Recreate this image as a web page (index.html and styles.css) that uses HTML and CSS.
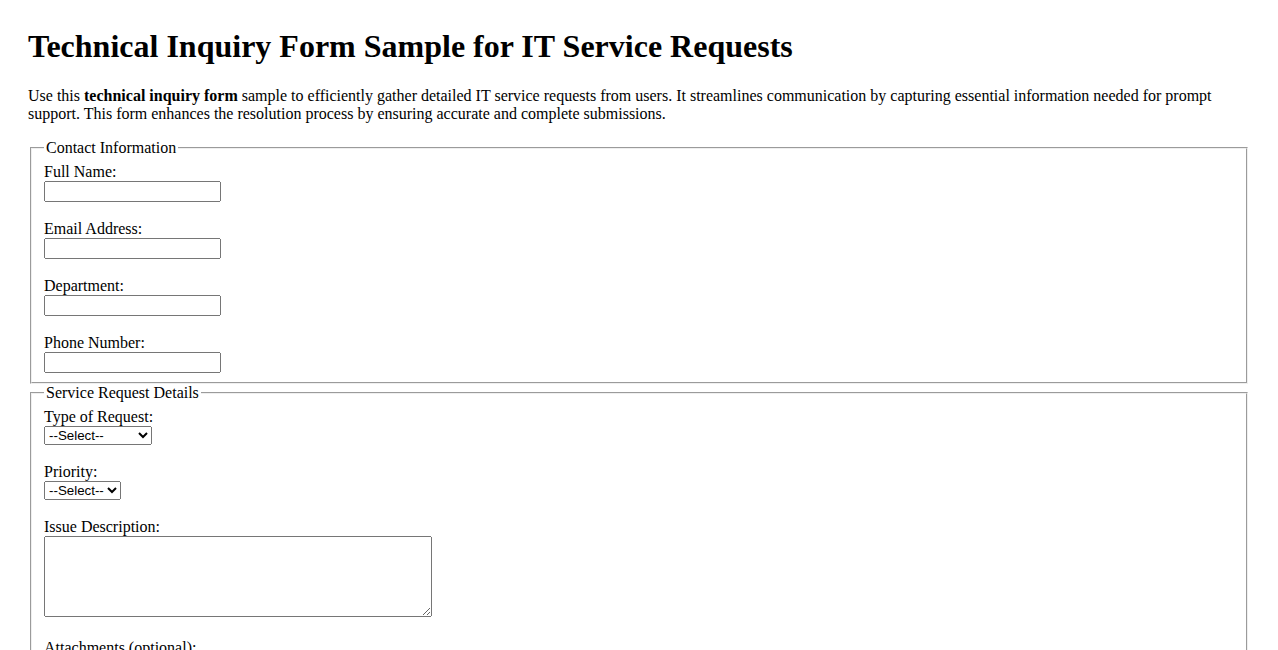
FILE: index.html
```html
<!DOCTYPE html>
<html lang="en">

<head>
  <meta charset="UTF-8" />
  <title>Technical Inquiry Form Sample for IT Service Requests</title>
  <meta name="viewport" content="width=device-width, initial-scale=1.0" />
  <link rel="stylesheet" href="styles.css">
</head>

<body>

  <h1>Technical Inquiry Form Sample for IT Service Requests</h1>
  <p>Use this <strong>technical inquiry form</strong> sample to efficiently gather detailed IT service requests from users. It streamlines communication by capturing essential information needed for prompt support. This form enhances the resolution process by ensuring accurate and complete submissions.</p>

  <form id="inquiryForm">
    <fieldset>
      <legend>Contact Information</legend>
      <label for="fullName">Full Name:</label><br>
      <input type="text" id="fullName" name="fullName" class="field" required><br><br>

      <label for="email">Email Address:</label><br>
      <input type="email" id="email" name="email" class="field" required><br><br>

      <label for="department">Department:</label><br>
      <input type="text" id="department" name="department" class="field"><br><br>

      <label for="phone">Phone Number:</label><br>
      <input type="tel" id="phone" name="phone" class="field">
    </fieldset>

    <fieldset class="details">
      <legend>Service Request Details</legend>
      <label for="requestType">Type of Request:</label><br>
      <select id="requestType" name="requestType" class="type-select" required>
        <option value="">--Select--</option>
        <option value="hardware">Hardware</option>
        <option value="software">Software</option>
        <option value="network">Network</option>
        <option value="access">Access Request</option>
        <option value="other">Other</option>
      </select><br><br>

      <label for="priority">Priority:</label><br>
      <select id="priority" name="priority" required>
        <option value="">--Select--</option>
        <option value="low">Low</option>
        <option value="medium">Medium</option>
        <option value="high">High</option>
      </select><br><br>

      <label for="description">Issue Description:</label><br>
      <textarea id="description" name="description" class="description" required></textarea><br><br>

      <label for="attachments">Attachments (optional):</label><br>
      <input type="file" id="attachments" name="attachments" multiple><br><br>
    </fieldset>
  </form>

</body>

</html>
```

FILE: styles.css
```css
body {
  margin: 0;
  padding: 28px;
  font-family: "Liberation Serif", "Times New Roman", serif;
  font-size: 16px;
  color: #000;
  background: #fff;
}

h1 {
  margin: 0 0 22px;
  font-size: 32px;
}

p {
  margin: 0 0 16px;
}

fieldset {
  padding-bottom: 9px;
}

.details {
  padding-top: 6px;
}

.field {
  width: 177px;
  height: 21px;
  box-sizing: border-box;
}

.type-select {
  width: 108px;
}

.description {
  width: 388px;
  height: 81px;
  box-sizing: border-box;
}
```
